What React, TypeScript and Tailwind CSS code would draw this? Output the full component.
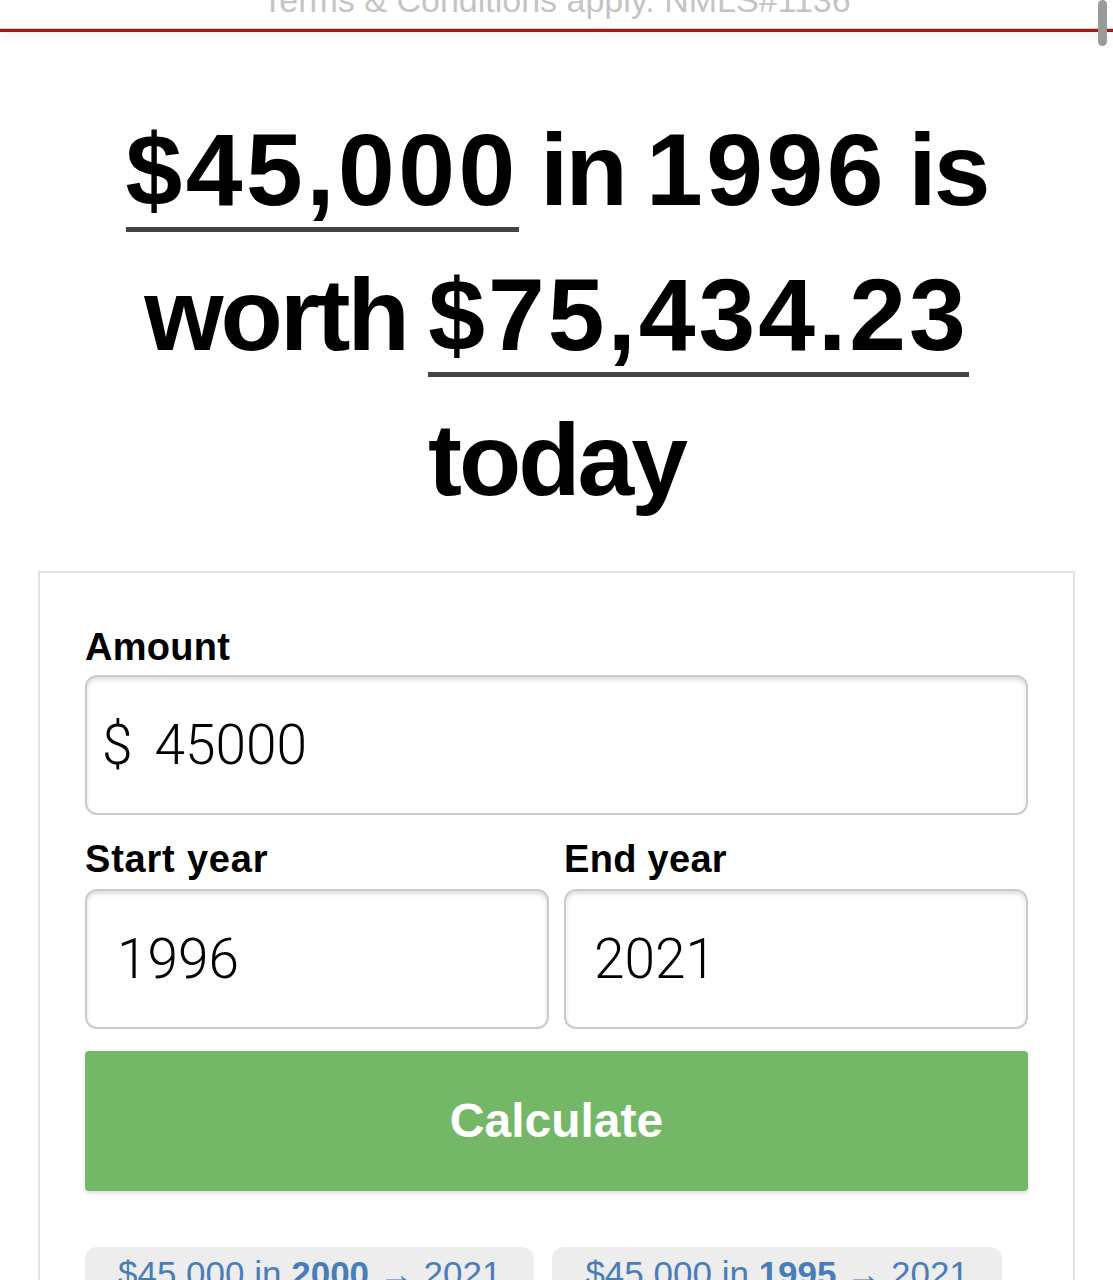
import React from "react";

const font = { fontFamily: '"Liberation Sans", Arial, Helvetica, sans-serif' };
const thin = { fontFamily: 'Roboto, "Liberation Sans", Arial, sans-serif' };

export default function App() {
  return (
    <div className="relative min-h-[1280px] bg-white text-black" style={font}>
      {/* top banner */}
      <div className="h-[28px] overflow-hidden text-center">
        <div className="-mt-[17px] text-[34px] leading-[34px] text-[#c4c4c4]">
          Terms &amp; Conditions apply. NMLS#1136
        </div>
      </div>
      <div className="h-[1px] bg-[#e8c9c0]" />
      <div className="h-[3px] bg-[#9d1b15] shadow-[0_4px_10px_rgba(0,0,0,0.12)]" />

      {/* scrollbar */}
      <div className="absolute right-[6px] top-0 h-[46px] w-[9px] rounded-full bg-[#9a9a9a]" />

      {/* headline */}
      <h1 className="mt-[66px] text-center text-[102px] font-bold leading-[145px] tracking-[-3px] [word-spacing:-4px]">
        <span className="border-b-[5px] border-[#444] tracking-[3.5px]">$45,000</span> in <span className="tracking-[3.5px]">1996</span> is
        <br />
        worth <span className="border-b-[5px] border-[#444] tracking-[3px]">$75,434.23</span>
        <br />
        today
      </h1>

      {/* card */}
      <div className="mx-[38px] mt-[38px] border-2 border-[#e2e2e2] bg-white px-[45px] pt-[52px] pb-[40px]">
        <div className="text-[38px] font-bold leading-[44px] tracking-[0.3px]">Amount</div>
        <div className="mt-[6px] flex h-[140px] items-center rounded-[12px] border-2 border-[#cacaca] pl-[15px] shadow-[inset_0_3px_4px_rgba(0,0,0,0.13)]">
          <span className="text-[55px] font-light leading-none" style={thin}>$</span>
          <span className="ml-[22px] text-[55px] font-light leading-none" style={thin}>45000</span>
        </div>

        <div className="mt-[22px] grid grid-cols-2 gap-[15px]">
          <div>
            <div className="text-[38px] font-bold leading-[44px] tracking-[0.8px]">Start year</div>
            <div className="mt-[8px] flex h-[140px] items-center rounded-[12px] border-2 border-[#cacaca] pl-[30px] shadow-[inset_0_3px_4px_rgba(0,0,0,0.13)]">
              <span className="text-[55px] font-light leading-none" style={thin}>1996</span>
            </div>
          </div>
          <div>
            <div className="text-[38px] font-bold leading-[44px] tracking-[0.3px]">End year</div>
            <div className="mt-[8px] flex h-[140px] items-center rounded-[12px] border-2 border-[#cacaca] pl-[28px] shadow-[inset_0_3px_4px_rgba(0,0,0,0.13)]">
              <span className="text-[55px] font-light leading-none" style={thin}>2021</span>
            </div>
          </div>
        </div>

        <button className="mt-[22px] flex h-[140px] w-full items-center justify-center rounded-[4px] bg-[#74b767] text-[48px] font-bold text-white shadow-[0_2px_4px_rgba(0,0,0,0.15)]">
          Calculate
        </button>

        <div className="mt-[56px] flex gap-[18px]">
          <div className="rounded-[12px] bg-[#ededed] px-[33px] pt-[7px] pb-[12px] text-[35px] leading-[40px] text-[#4a7db8]">
            $45,000 in <b>2000</b> → 2021
          </div>
          <div className="rounded-[12px] bg-[#ededed] px-[33px] pt-[7px] pb-[12px] text-[35px] leading-[40px] text-[#4a7db8]">
            $45,000 in <b>1995</b> → 2021
          </div>
        </div>
      </div>
    </div>
  );
}
